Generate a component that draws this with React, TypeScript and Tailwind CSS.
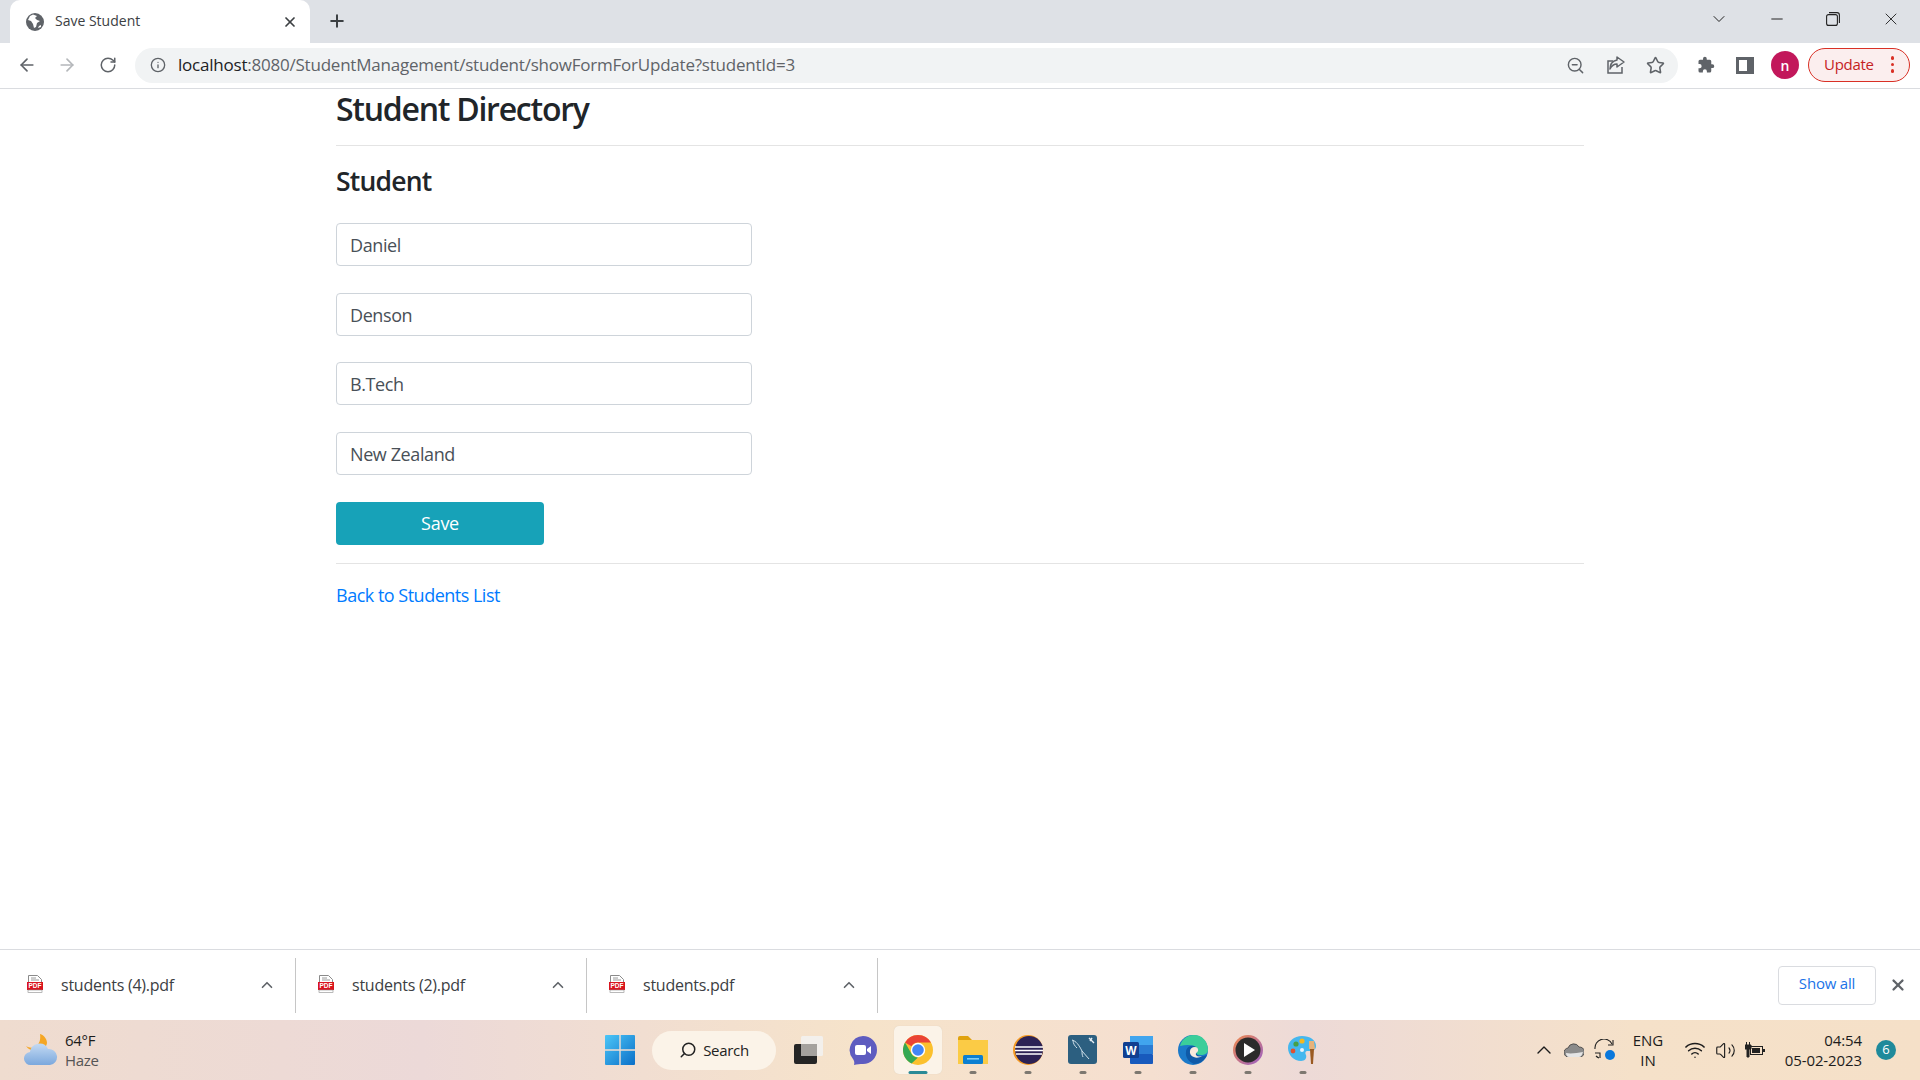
import React from "react";
import { ArrowLeft, ArrowRight, RotateCw, Info, ZoomOut, Star, Plus, X, ChevronDown, ChevronUp, Minus, Search, Wifi, Volume2 } from "lucide-react";

const font = "font-['Open_Sans','Noto_Sans',sans-serif]";

function Field({ value }: { value: string }) {
  return (
    <div className="flex h-[43px] w-[416px] items-center rounded-[4px] border border-[#ced4da] bg-white pl-[13px] pt-[2px] text-[18px] tracking-[-0.4px] text-[#495057]">
      {value}
    </div>
  );
}

function PdfIcon() {
  return (
    <svg width="16" height="18" viewBox="0 0 16 18" className="mb-[2px] shrink-0">
      <path d="M1.5 .5h9l4 4v3h-13z" fill="#fff" stroke="#8a8a8a" />
      <path d="M4 3h5M4 5h8" stroke="#9a9a9a" />
      <rect x="0" y="7" width="16" height="8" fill="#d9141e" />
      <rect x="1" y="15" width="14" height="2.5" fill="#fff" stroke="#8a8a8a" strokeWidth=".6" />
      <text x="8" y="13.4" textAnchor="middle" fontSize="6.5" fontWeight="700" fill="#fff" fontFamily="Liberation Sans">PDF</text>
    </svg>
  );
}

function Download({ name }: { name: string }) {
  return (
    <div className="flex h-[55px] w-[291px] items-center border-r border-[#c6c6c6] pl-[22px] pr-[19px]">
      <PdfIcon />
      <span className="ml-[18px] flex-1 text-[16px] tracking-[-0.25px] text-[#3c4043]">{name}</span>
      <ChevronUp size={18} strokeWidth={2.2} className="text-[#5f6368]" />
    </div>
  );
}

function Tile({ children, active, dot = true }: { children: React.ReactNode; active?: boolean; dot?: boolean }) {
  return (
    <div className="flex h-[60px] w-[55px] items-center justify-center">
      <div className={`relative flex h-[48px] w-[48px] items-center justify-center rounded-[5px] ${active ? "bg-[#fbf3e8] shadow-[0_0_1px_#d9cbb8]" : ""}`}>
        {children}
        {dot && <span className={`absolute bottom-0 left-1/2 h-[3px] -translate-x-1/2 rounded-full ${active ? "w-[19px] bg-[#2a8a96]" : "w-[7px] bg-[#7d7870]"}`} />}
      </div>
    </div>
  );
}

const WinLogo = () => (
  <svg width="30" height="30" viewBox="0 0 30 30">
    <defs>
      <linearGradient id="wl" x1="0" y1="0" x2="1" y2="1">
        <stop offset="0" stopColor="#4cc6f7" />
        <stop offset="1" stopColor="#0a6fc8" />
      </linearGradient>
    </defs>
    <path d="M0 1a1 1 0 011-1h13.300v14.300H0zM15.700 0H29a1 1 0 011 1v13.300H15.700zM0 15.700h14.300V30H1a1 1 0 01-1-1zM15.700 15.700H30V29a1 1 0 01-1 1H15.700z" fill="url(#wl)" />
  </svg>
);

const TaskView = () => (
  <svg width="30" height="30" viewBox="0 0 30 30">
    <rect x="1" y="9" width="23" height="20" rx="2" fill="#252525" />
    <rect x="8" y="1" width="22" height="20" rx="1.500" fill="#f3f0ec" />
    <rect x="8" y="9" width="16" height="12" fill="#a5a29e" />
  </svg>
);

const Chat = () => (
  <svg width="30" height="30" viewBox="0 0 30 30">
    <path d="M15 1a14 14 0 110 28c-3 0-6 0-9 1 .5-2 .5-4-1-6A14 14 0 0115 1z" fill="#5e5cc0" />
    <rect x="7" y="10" width="11" height="10" rx="2" fill="#fff" />
    <path d="M19 14l4-3v8l-4-3z" fill="#fff" />
  </svg>
);

const Chrome = () => (
  <svg width="30" height="30" viewBox="0 0 30 30">
    <circle cx="15" cy="15" r="15" fill="#fbc02d" />
    <path d="M15 0a15 15 0 0113 7.500H15a7.500 7.500 0 00-6.500 3.750L2 7.500A15 15 0 0115 0z" fill="#ea4335" />
    <path d="M2 7.500l6.500 11.250A7.500 7.500 0 0015 22.500L8.500 28.500A15 15 0 012 7.500z" fill="#34a853" />
    <circle cx="15" cy="15" r="7.200" fill="#fff" />
    <circle cx="15" cy="15" r="5.800" fill="#4285f4" />
  </svg>
);

const Folder = () => (
  <svg width="30" height="28" viewBox="0 0 30 28">
    <path d="M0 2a2 2 0 012-2h8l4 4h-14z" fill="#e0a20e" />
    <rect x="0" y="4" width="30" height="24" fill="#fbcb45" />
    <rect x="5" y="19" width="20" height="9" rx="1.500" fill="#0c7fd1" />
    <rect x="9" y="22" width="12" height="1.600" fill="#7fcdf5" />
  </svg>
);

const Eclipse = () => (
  <svg width="30" height="30" viewBox="0 0 30 30">
    <circle cx="15" cy="15" r="15" fill="#f59a23" />
    <circle cx="16" cy="15" r="14" fill="#2c2255" />
    <path d="M2 12h28M2 15.500h28M3 19h26" stroke="#fff" strokeWidth="1.600" />
  </svg>
);

const MySql = () => (
  <svg width="30" height="30" viewBox="0 0 30 30">
    <rect width="29" height="29" rx="3" fill="#2c5f80" />
    <path d="M4 5c4 1 7 5 10 11 2 3 5 5 7 8M5 5c0 4 2 6 4 8M14 16c0 2 0 4 1 6" fill="none" stroke="#cfe0ea" strokeWidth="1" />
    <path d="M21 3l5 5M24 3l-2 3" stroke="#e6eff5" strokeWidth="1.400" />
  </svg>
);

const Word = () => (
  <svg width="30" height="30" viewBox="0 0 30 30">
    <rect x="7" y="1" width="23" height="9" fill="#41a5ee" />
    <rect x="7" y="10" width="23" height="9" fill="#2b7cd3" />
    <rect x="7" y="19" width="23" height="10" rx="1" fill="#185abd" />
    <rect x="0" y="7" width="16" height="16" rx="1.500" fill="#103f91" />
    <text x="8" y="19.500" textAnchor="middle" fontSize="12" fontWeight="700" fill="#fff" fontFamily="Liberation Sans">W</text>
  </svg>
);

const Edge = () => (
  <svg width="30" height="30" viewBox="0 0 30 30">
    <circle cx="15" cy="15" r="15" fill="#1b79c9" />
    <path d="M2 11C4 4 9 0 16 0c8 0 14 6 14 15 0 3-3 5-7 5-3 0-5-1-5-2 2-1 3-3 1-5-3-3-9-4-17-2z" fill="#3bce9a" />
    <path d="M8 17c0-4 4-7 8-6 3 1 4 4 2 6 0 3 4 6 11 3-2 5-7 9-13 9C11 27 7 22 8 17z" fill="#0f5aa8" />
    <path d="M17 12c4 0 4 5 1 6-1 3 2 4 6 3-6 4-13 0-12-5 0-2 2-4 5-4z" fill="#f8e9dc" />
  </svg>
);

const Player = () => (
  <svg width="30" height="30" viewBox="0 0 30 30">
    <defs>
      <linearGradient id="pl" x1="0" y1="0" x2="1" y2="1">
        <stop offset="0" stopColor="#f08a4b" />
        <stop offset="1" stopColor="#9a5fc8" />
      </linearGradient>
    </defs>
    <circle cx="15" cy="15" r="15" fill="url(#pl)" />
    <circle cx="15" cy="15" r="12.500" fill="#2b2b2b" />
    <path d="M11 8l11 7-11 7z" fill="#fff" />
  </svg>
);

const Paint = () => (
  <svg width="30" height="30" viewBox="0 0 30 30">
    <path d="M14 1c8 0 14 4 14 10 0 5-5 5-8 5-3 0-3 2-2 4 1 3-1 6-5 6C6 26 0 20 0 13 0 6 6 1 14 1z" fill="#45b7ee" />
    <circle cx="8" cy="9" r="2.600" fill="#46a049" />
    <circle cx="14" cy="6" r="2.600" fill="#f5b81f" />
    <circle cx="5" cy="16" r="2.400" fill="#e2502f" />
    <circle cx="14" cy="15" r="2" fill="#e8f4fb" />
    <path d="M22 14h4l-1 15h-2z" fill="#9a5a22" />
    <path d="M21 6h5l1 8h-6z" fill="#e6b27a" />
  </svg>
);

export default function App() {
  return (
    <div className={`flex h-screen w-[1920px] flex-col overflow-hidden bg-white ${font}`}>
      {/* tab strip */}
      <div className="flex h-[43px] shrink-0 items-center bg-[#dee1e6]">
        <div className="ml-[10px] flex h-[43px] w-[300px] items-center rounded-t-[10px] bg-white pl-[16px] pr-[12px]">
          <svg width="18" height="18" viewBox="0 0 18 18" className="shrink-0">
            <circle cx="9" cy="9" r="9" fill="#5f6368" />
            <path d="M7 1.500L4 3 2 7l3 1 2 3 1 4 2-1 1-4 3-2-3-1-2-2 2-2z" fill="#fff" />
            <path d="M15 12l-2 1-1 2 3-1z" fill="#fff" />
          </svg>
          <span className="mb-[2px] ml-[11px] flex-1 text-[14px] text-[#3c4043]">Save Student</span>
          <X size={16} strokeWidth={2.6} className="text-[#3c4043]" />
        </div>
        <Plus size={20} strokeWidth={2.4} className="ml-[17px] mb-[1px] text-[#3c4043]" />
        <div className="flex-1" />
        <ChevronDown size={20} strokeWidth={1.2} className="mb-[5px] mr-[39px] text-[#222]" />
        <Minus size={18} strokeWidth={1.2} className="mb-[5px] mr-[40px] text-[#111]" />
        <svg width="14" height="14" viewBox="0 0 14 14" className="mb-[5px] mr-[41px]" fill="none" stroke="#222" strokeWidth="1.100">
          <rect x=".6" y="2.600" width="10.800" height="10.800" rx="2" />
          <path d="M3 .6h8a2.400 2.400 0 012.400 2.400v8" />
        </svg>
        <X size={20} strokeWidth={1.1} className="mb-[5px] mr-[19px] text-[#222]" />
      </div>

      {/* toolbar */}
      <div className="flex h-[46px] shrink-0 items-center border-b border-[#dadce0] bg-white pb-[1px]">
        <ArrowLeft size={20} strokeWidth={2} className="ml-[17px] text-[#5f6368]" />
        <ArrowRight size={20} strokeWidth={2} className="ml-[20px] text-[#b4b7ba]" />
        <RotateCw size={18} strokeWidth={2} className="ml-[22px] text-[#5f6368]" />
        <div className="ml-[18px] flex h-[35px] w-[1543px] items-center rounded-full bg-[#f1f3f4] pl-[15px]">
          <Info size={16} strokeWidth={2} className="text-[#5f6368]" />
          <span className="ml-[12px] flex-1 text-[17px] tracking-[-0.22px] text-[#5f6368]">
            <span className="text-[#202124]">localhost</span>:8080/StudentManagement/student/showFormForUpdate?studentId=3
          </span>
          <ZoomOut size={19} strokeWidth={1.8} className="mr-[21px] text-[#5f6368]" />
          <svg width="20" height="20" viewBox="0 0 20 20" fill="none" stroke="#5f6368" strokeWidth="1.500" className="mr-[20px]">
            <path d="M16 12v6H2V6h5" />
            <path d="M11 2l7 5-7 5V9c-3 0-5 1-7 5 0-5 3-8 7-9z" strokeLinejoin="round" />
          </svg>
          <Star size={19} strokeWidth={2} className="mr-[13px] text-[#5f6368]" />
        </div>
        <svg width="18" height="18" viewBox="0 0 24 24" fill="#5f6368" className="ml-[19px]">
          <path d="M20.500 11H19V7a2 2 0 00-2-2h-4V3.500a2.500 2.500 0 00-5 0V5H4a2 2 0 00-2 2v3.800h1.500a2.700 2.700 0 010 5.400H2V20a2 2 0 002 2h3.800v-1.500a2.700 2.700 0 015.400 0V22H17a2 2 0 002-2v-4h1.500a2.500 2.500 0 000-5z" />
        </svg>
        <div className="ml-[21px] flex h-[17px] w-[18px] justify-end border-[3px] border-[#5f6368] bg-[#5f6368]">
          <div className="mr-[4px] h-full w-[8px] bg-white" />
        </div>
        <div className="ml-[17px] flex h-[28px] w-[28px] items-center justify-center rounded-full bg-[#c2185b] text-[14px] font-semibold text-white">n</div>
        <div className="ml-[9px] flex h-[34px] w-[102px] items-center rounded-full border border-[#d93025] bg-[#fbeeee] pb-[1px] pl-[15px] text-[15px] tracking-[-0.3px] text-[#c5221f]">
          Update
          <span className="ml-[17px] flex flex-col gap-[3px]">
            <span className="h-[3.5px] w-[3.5px] rounded-full bg-[#d93025]" />
            <span className="h-[3.5px] w-[3.5px] rounded-full bg-[#d93025]" />
            <span className="h-[3.5px] w-[3.5px] rounded-full bg-[#d93025]" />
          </span>
        </div>
      </div>

      {/* page */}
      <main className="flex-1 pl-[336px]">
        <div className="w-[1248px]">
          <h1 className="flex h-[56px] items-start text-[32px] font-semibold leading-[40px] tracking-[-1.25px] text-[#212529]">Student Directory</h1>
          <div className="h-px bg-[#e4e4e4]" />
          <h3 className="mt-[17px] text-[26.500px] font-semibold leading-[36px] tracking-[-0.8px] text-[#212529]">Student</h3>
          <div className="mt-[24px] flex flex-col gap-[26.67px]">
            <Field value="Daniel" />
            <Field value="Denson" />
            <Field value="B.Tech" />
            <Field value="New Zealand" />
          </div>
          <button className="mt-[27px] flex h-[43px] w-[208px] items-center justify-center rounded-[4px] bg-[#17a2b8] text-[18px] tracking-[-0.3px] text-white">Save</button>
          <div className="mt-[18px] h-px bg-[#e4e4e4]" />
          <a className="mt-[19px] block text-[18px] leading-[24px] tracking-[-0.5px] text-[#007bff]">Back to Students List</a>
        </div>
      </main>

      {/* downloads */}
      <div className="flex h-[71px] shrink-0 items-center border-t border-[#dadce0] bg-white">
        <div className="w-[5px]" />
        <Download name="students (4).pdf" />
        <Download name="students (2).pdf" />
        <Download name="students.pdf" />
        <div className="flex-1" />
        <div className="flex h-[39px] w-[98px] items-center justify-center rounded-[4px] border border-[#dadce0] pb-[4px] text-[15px] font-medium tracking-[-0.2px] text-[#1a73e8]">Show all</div>
        <X size={18} strokeWidth={3} className="ml-[13px] mr-[13px] text-[#5f6368]" />
      </div>

      {/* taskbar */}
      <div className="flex h-[60px] shrink-0 items-center bg-[linear-gradient(90deg,#efdccf_0%,#ecd9d8_22%,#f6e3ca_45%,#f5dfd0_60%,#eddad7_68%,#f5e1c9_85%,#f5e0c8_100%)]">
        <svg width="34" height="32" viewBox="0 0 34 32" className="ml-[24px]">
          <defs>
            <linearGradient id="cl" x1="0" y1="0" x2="0" y2="1">
              <stop offset="0" stopColor="#c4daf3" />
              <stop offset="1" stopColor="#7ba8dd" />
            </linearGradient>
          </defs>
          <path d="M16 0c1 6-1 11-5 13-3 1-6 1-9-1 5 8 20 6 21-3 0-4-3-8-7-9z" fill="#f5a623" />
          <path d="M7 31a6.500 6.500 0 01-1-13 9.500 9.500 0 0118-3 8 8 0 012 16z" fill="url(#cl)" />
        </svg>
        <div className="ml-[7px] flex w-[60px] flex-col text-[15px] leading-[20px] tracking-[-0.3px]">
          <span className="text-[#1c1c1c]">64°F</span>
          <span className="text-[#555]">Haze</span>
        </div>
        <div className="ml-[467px] flex w-[55px] justify-center"><WinLogo /></div>
        <div className="ml-[5px] flex h-[39px] w-[124px] items-center justify-center rounded-full bg-[#fbf3e8] text-[15px] tracking-[-0.3px] text-[#222]">
          <Search size={18} strokeWidth={2} className="mr-[6px] -scale-x-100 text-[#222]" />
          Search
        </div>
        <div className="ml-[4px]"><Tile dot={false}><TaskView /></Tile></div>
        <Tile dot={false}><Chat /></Tile>
        <Tile active><Chrome /></Tile>
        <Tile><Folder /></Tile>
        <Tile><Eclipse /></Tile>
        <Tile><MySql /></Tile>
        <Tile><Word /></Tile>
        <Tile><Edge /></Tile>
        <Tile><Player /></Tile>
        <Tile><Paint /></Tile>
        <div className="flex-1" />
        <ChevronUp size={24} strokeWidth={1.4} className="text-[#1c1c1c]" />
        <svg width="20" height="14" viewBox="0 0 20 14" className="ml-[8px]">
          <path d="M5 14a4.500 4.500 0 01-1-9 6 6 0 0111-1 5 5 0 011 10z" fill="#8b8b8b" stroke="#333" strokeWidth=".7" />
          <path d="M2 10c5 1 11 0 17-1-1 3-2 5-4 5H5c-2 0-3-2-3-4z" fill="#e5e5e5" />
        </svg>
        <svg width="22" height="22" viewBox="0 0 22 22" fill="none" stroke="#222" strokeWidth="1.100" className="ml-[10px]">
          <path d="M1 10a9 9 0 0117-5M2 17a9 9 0 003 2" />
          <path d="M19 1v5h-5M1 14h5v5" />
          <circle cx="16" cy="16" r="5" fill="#0a78dc" stroke="none" />
        </svg>
        <div className="ml-[12px] flex w-[40px] flex-col items-center text-[15px] leading-[20px] text-[#1c1c1c]">
          <span>ENG</span>
          <span>IN</span>
        </div>
        <Wifi size={22} strokeWidth={1.6} className="ml-[16px] text-[#1c1c1c]" />
        <Volume2 size={21} strokeWidth={1.3} className="ml-[9px] text-[#1c1c1c]" />
        <svg width="20" height="16" viewBox="0 0 20 16" className="ml-[9px]">
          <rect x="5.500" y="4.500" width="12" height="8" fill="none" stroke="#222" />
          <rect x="7" y="6" width="8" height="5" fill="#222" />
          <rect x="18" y="7" width="2" height="3" fill="#222" />
          <path d="M0 3h6v4H4v8H2V7H0zM1.500 0v3M4.500 0v3" stroke="#222" fill="#222" />
        </svg>
        <div className="ml-[7px] flex w-[90px] flex-col items-end text-[15px] leading-[20px] tracking-[-0.1px] text-[#1c1c1c]">
          <span>04:54</span>
          <span>05-02-2023</span>
        </div>
        <div className="ml-[14px] mr-[24px] flex h-[20px] w-[20px] items-center justify-center rounded-full bg-[#1f8a9b] text-[13px] text-white">6</div>
      </div>
    </div>
  );
}
